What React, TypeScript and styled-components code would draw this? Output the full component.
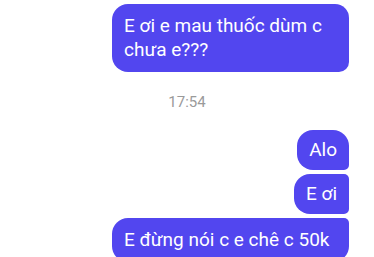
import React from "react";
import styled, { createGlobalStyle } from "styled-components";

const Global = createGlobalStyle`
  html, body {
    margin: 0;
    padding: 0;
    background: #ffffff;
    overflow: hidden;
  }
  body {
    font-family: Roboto, "Noto Sans", "DejaVu Sans", sans-serif;
  }
`;

const Thread = styled.div`
  display: flex;
  flex-direction: column;
  align-items: flex-end;
  padding: 4px 25px 0 0;
  height: 257px;
  box-sizing: border-box;
`;

const Group = styled.div`
  display: flex;
  flex-direction: column;
  align-items: flex-end;
  gap: 4px;
`;

type BubbleProps = {
  $tr?: number;
  $br?: number;
  $pad?: number;
  $wide?: boolean;
};

const Bubble = styled.div<BubbleProps>`
  box-sizing: border-box;
  max-width: 237px;
  ${(p) => (p.$wide ? "width: 237px;" : "")}
  background: #5246ef;
  color: #ffffff;
  font-size: 19px;
  line-height: 24px;
  padding: ${(p) => p.$pad ?? 8}px 12px;
  border-radius: 16px ${(p) => p.$tr ?? 16}px ${(p) => p.$br ?? 16}px 16px;
`;

const Stamp = styled.div`
  align-self: stretch;
  margin: 20px -25px 18px 0;
  text-align: center;
  color: #9a9a9a;
  font-size: 15px;
  line-height: 20px;
`;

export default function App() {
  return (
    <>
      <Global />
      <Thread>
        <Bubble $pad={10} $tr={14} $br={10}>
          E ơi e mau thuốc dùm c chưa e???
        </Bubble>
        <Stamp>17:54</Stamp>
        <Group>
          <Bubble $br={5}>Alo</Bubble>
          <Bubble $tr={5} $br={5}>E ơi</Bubble>
          <Bubble $tr={5} $wide $pad={10}>
            E đừng nói c e chê c 50k
          </Bubble>
        </Group>
      </Thread>
    </>
  );
}
